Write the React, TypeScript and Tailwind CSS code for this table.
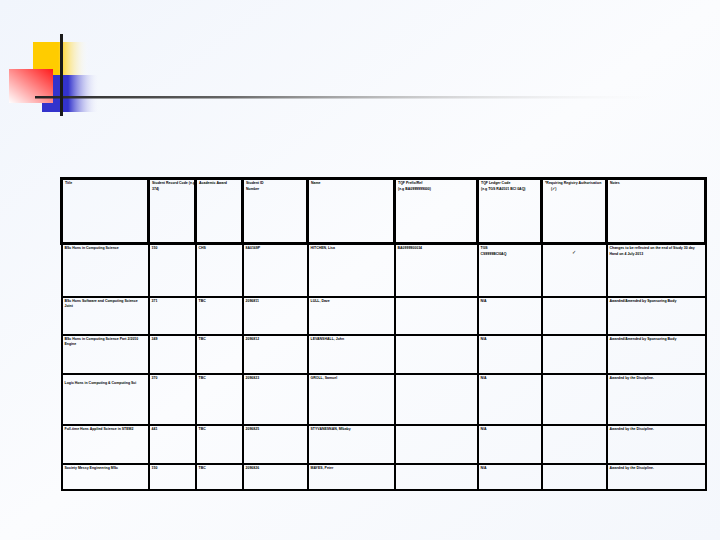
import React from "react";

const header = [
  "Title",
  "Student Record Code (e.g|374)",
  "Academic Award",
  "Student ID|Number",
  "Name",
  "TQF Prefix/Ref|(e.g BA0999999000)",
  "TQF Ledger Code|(e.g TGS RA0101 BCI 0AQ)",
  "*Requiring Registry Authorisation",
  "Notes",
];

const widths = [87, 47, 47, 65, 87, 83, 64, 65, 99];

const rows: { h: string; cells: string[] }[] = [
  {
    h: "h-[53px]",
    cells: [
      "BSc Hons in Computing Science",
      "150",
      "CHS",
      "8A0169P",
      "HITCHEN, Lisa",
      "BA0999900034",
      "TGS|CS9999BCI0AQ",
      "✓",
      "Changes to be reflected on the end of Study 30 day Hand on 4 July 2013",
    ],
  },
  {
    h: "h-[38px]",
    cells: [
      "BSc Hons Software and Computing Science Joint",
      "371",
      "TBC",
      "2096811",
      "LULL, Dave",
      "",
      "N/A",
      "",
      "Awarded/Amended by Sponsoring Body",
    ],
  },
  {
    h: "h-[39px]",
    cells: [
      "BSc Hons in Computing Science Part 2/2010 Engine",
      "349",
      "TBC",
      "2096812",
      "LEVANSHALL, John",
      "",
      "N/A",
      "",
      "Awarded/Amended by Sponsoring Body",
    ],
  },
  {
    h: "h-[51px]",
    cells: [
      "Logic Hons in Computing & Computing Sci",
      "370",
      "TBC",
      "2096823",
      "GROLL, Samuel",
      "",
      "N/A",
      "",
      "Awarded by the Discipline.",
    ],
  },
  {
    h: "h-[39px]",
    cells: [
      "Full-time Hons Applied Science in STEM2",
      "441",
      "TBC",
      "2096825",
      "STYVANESNAN, Mlbaby",
      "",
      "N/A",
      "",
      "Awarded by the Discipline.",
    ],
  },
  {
    h: "h-[26px]",
    cells: [
      "Society Messy Engineering MSc",
      "150",
      "TBC",
      "2096826",
      "MAYES, Peter",
      "",
      "N/A",
      "",
      "Awarded by the Discipline.",
    ],
  },
];

function Lines({ text }: { text: string }) {
  if (!text.includes("|")) return <>{text}</>;
  return (
    <>
      {text.split("|").map((s, k) => (
        <div key={k} className="whitespace-nowrap">
          {s}
        </div>
      ))}
    </>
  );
}

function Logo() {
  return (
    <svg width="720" height="130" viewBox="0 0 720 130" className="block">
      <defs>
        <linearGradient id="gy" x1="0" y1="0" x2="1" y2="0">
          <stop offset="0" stopColor="#ffcc00" />
          <stop offset="0.45" stopColor="#ffcc00" />
          <stop offset="1" stopColor="#ffffff" stopOpacity="0" />
        </linearGradient>
        <linearGradient id="gb" x1="0" y1="0" x2="1" y2="0">
          <stop offset="0" stopColor="#3333cc" />
          <stop offset="0.45" stopColor="#3333cc" />
          <stop offset="1" stopColor="#ffffff" stopOpacity="0" />
        </linearGradient>
        <linearGradient id="gr" x1="1" y1="0" x2="0" y2="1">
          <stop offset="0" stopColor="#ff1a1a" />
          <stop offset="1" stopColor="#ffffff" />
        </linearGradient>
        <linearGradient id="gl" x1="0" y1="0" x2="1" y2="0">
          <stop offset="0" stopColor="#222222" />
          <stop offset="0.3" stopColor="#666666" />
          <stop offset="1" stopColor="#ffffff" stopOpacity="0" />
        </linearGradient>
      </defs>
      <rect x="33" y="42" width="56" height="33" fill="url(#gy)" />
      <rect x="42" y="75" width="58" height="37" fill="url(#gb)" />
      <rect x="9" y="69" width="44" height="34" fill="url(#gr)" />
      <rect x="35" y="96" width="640" height="2.5" fill="url(#gl)" />
      <rect x="60" y="34" width="3" height="82" fill="#1a1a1a" />
    </svg>
  );
}

export default function App() {
  return (
    <div
      className="w-[720px] h-[540px] overflow-hidden bg-gradient-to-br from-[#f1f5fc] via-[#fbfcfe] to-[#f4f7fc] text-black"
      style={{ fontFamily: '"Liberation Sans", Arial, sans-serif' }}
    >
      <Logo />
      <table className="ml-[60px] mt-[47px] border-collapse table-fixed w-[644px] text-[3.5px] leading-[5.5px] font-bold">
        <colgroup>
          {widths.map((w, i) => (
            <col key={i} style={{ width: w }} />
          ))}
        </colgroup>
        <thead>
          <tr className="h-[65px]">
            {header.map((t, i) => (
              <th
                key={i}
                className="border-[3px] border-black align-top text-left font-bold px-[2px] pt-[1px]"
              >
                {i === 7 ? (
                  <>
                    <div className="whitespace-nowrap">{t}</div>
                    <div className="pl-[6px]">(✓)</div>
                  </>
                ) : (
                  <Lines text={t} />
                )}
              </th>
            ))}
          </tr>
        </thead>
        <tbody>
          {rows.map((r, ri) => (
            <tr key={ri} className={r.h}>
              {r.cells.map((c, ci) => (
                <td
                  key={ci}
                  className={
                    "border-2 border-black align-top px-[2px] pt-[1px] " +
                    (ci === 7 ? "text-center pt-[5px] text-[5px] font-normal" : "") +
                    (ri === 3 && ci === 0 ? "pt-[6px]" : "")
                  }
                >
                  <Lines text={c} />
                </td>
              ))}
            </tr>
          ))}
        </tbody>
      </table>
    </div>
  );
}
